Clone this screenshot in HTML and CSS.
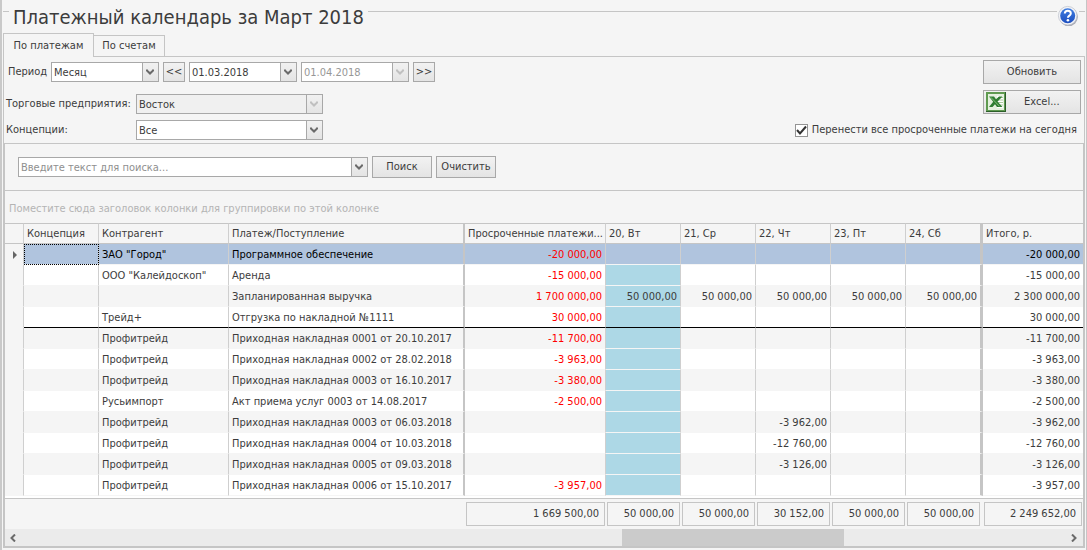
FILE: index.html
```html
<!DOCTYPE html>
<html lang="ru">
<head>
<meta charset="utf-8">
<title>Платежный календарь</title>
<link rel="stylesheet" href="styles.css">
</head>
<body>
<main class="window">
<header class="title-bar">
  <span class="title-rule title-rule-start"></span>
  <h1 class="title">Платежный календарь за Март 2018</h1>
  <span class="title-rule"></span>
  <button class="help" type="button" aria-label="Справка">
    <svg width="22" height="22" viewBox="0 0 22 22">
      <defs><linearGradient id="hb" x1="0" y1="0" x2="0" y2="1"><stop offset="0" stop-color="#3f7de0"/><stop offset="1" stop-color="#1d4fc0"/></linearGradient></defs>
      <circle cx="11.6" cy="11.8" r="9.3" fill="#8a8f9c" opacity=".7"/>
      <circle cx="10.7" cy="10.7" r="9.3" fill="#f2f3f7" stroke="#bcc0ca" stroke-width=".7"/>
      <circle cx="10.7" cy="10.7" r="7.5" fill="url(#hb)"/>
      <path d="M7.8 8.6C7.8 6.8 9 5.8 10.8 5.8s3 1 3 2.6c0 2.2-2.9 2.2-2.9 4.4" fill="none" stroke="#fff" stroke-width="2"/>
      <circle cx="10.9" cy="15.3" r="1.3" fill="#fff"/>
    </svg>
  </button>
  <span class="title-rule title-rule-end"></span>
</header>
<div class="tabs" role="tablist">
  <button class="tab tab-active" type="button" role="tab" aria-selected="true">По платежам</button>
  <button class="tab" type="button" role="tab" aria-selected="false">По счетам</button>
  <span class="tab-rule"></span>
</div>
<section class="page">
<form class="filters">
  <div class="filter-fields">
    <div class="line line-period">
      <label for="period">Период</label>
      <span class="combo combo-period"><select id="period"><option>Месяц</option></select><svg class="arrow" viewBox="0 0 8 7"><path d="M1 1.5v1L4 5.5 7 2.5v-1" /></svg></span>
      <button class="btn step" type="button">&lt;&lt;</button>
      <span class="combo combo-date"><input type="text" value="01.03.2018" aria-label="Начало периода"><svg class="arrow" viewBox="0 0 8 7"><path d="M1 1.5v1L4 5.5 7 2.5v-1" /></svg></span>
      <span class="combo combo-date combo-off"><input type="text" value="01.04.2018" aria-label="Конец периода" disabled><svg class="arrow" viewBox="0 0 8 7"><path d="M1 1.5v1L4 5.5 7 2.5v-1" /></svg></span>
      <button class="btn step" type="button">&gt;&gt;</button>
    </div>
    <div class="line line-shop">
      <label class="wide" for="shop">Торговые предприятия:</label>
      <span class="combo combo-wide combo-off combo-gray"><select id="shop" disabled><option>Восток</option></select><svg class="arrow" viewBox="0 0 8 7"><path d="M1 1.5v1L4 5.5 7 2.5v-1" /></svg></span>
    </div>
    <div class="line">
      <label class="wide" for="concept">Концепции:</label>
      <span class="combo combo-wide"><select id="concept"><option>Все</option></select><svg class="arrow" viewBox="0 0 8 7"><path d="M1 1.5v1L4 5.5 7 2.5v-1" /></svg></span>
    </div>
  </div>
  <div class="actions">
    <button class="btn action" type="button">Обновить</button>
    <button class="btn action excel" type="button">
      <svg width="20" height="20" viewBox="0 0 20 20">
        <rect width="20" height="20" fill="#2c5f2a"/>
        <rect x="0" y="0" width="19" height="19" fill="#5f9a50"/>
        <rect x="2" y="2" width="16" height="16" fill="#e4f0de"/>
        <path d="M11 4h6v12h-6z" fill="#fff"/>
        <path d="M12 5.500h5M12 8h5M12 10.500h5M12 13h5" stroke="#a9cb9c" stroke-width="1"/>
        <path d="M3 4.500h5l2 2.700L13 4.500h3.500l-5 5L16.500 15h-5.500L9 12.300 6.500 15H3l4.200-5.200z" fill="#2f7d32"/>
        <path d="M4.800 5.300L13.500 14.300" stroke="#86c27a" stroke-width="1"/>
      </svg>
      <span>Excel...</span>
    </button>
    <label class="check"><input type="checkbox" checked><span class="box"><svg width="11" height="11" viewBox="0 0 11 11"><path d="M1 5l3 3.500L10 1.500" /></svg></span>Перенести все просроченные платежи на сегодня</label>
  </div>
</form>
<section class="grid">
  <form class="search">
    <span class="combo combo-search"><input type="text" placeholder="Введите текст для поиска..." aria-label="Поиск"><svg class="arrow" viewBox="0 0 8 7"><path d="M1 1.5v1L4 5.5 7 2.5v-1" /></svg></span>
    <button class="btn find" type="button">Поиск</button>
    <button class="btn find" type="button">Очистить</button>
  </form>
  <p class="group-hint">Поместите сюда заголовок колонки для группировки по этой колонке</p>
  <table class="data">
    <colgroup><col class="c-mark"><col class="c-concept"><col class="c-agent"><col class="c-pay"><col class="c-over"><col class="c-day"><col class="c-day"><col class="c-day"><col class="c-day"><col class="c-last"><col class="c-total"></colgroup>
    <thead><tr><th></th><th>Концепция</th><th>Контрагент</th><th class="fix">Платеж/Поступление</th><th>Просроченные платежи...</th><th>20, Вт</th><th>21, Ср</th><th>22, Чт</th><th>23, Пт</th><th class="fix-end">24, Сб</th><th>Итого, р.</th></tr></thead>
    <tbody>
      <tr class="sel"><td><svg class="mark" width="5" height="8" viewBox="0 0 5 8"><path d="M0 0l4 4-4 4z"/></svg></td><td class="focus"></td><td>ЗАО "Город"</td><td class="fix">Программное обеспечение</td><td class="red">-20 000,00</td><td></td><td></td><td></td><td></td><td class="fix-end"></td><td>-20 000,00</td></tr>
      <tr><td></td><td></td><td>ООО "Калейдоскоп"</td><td class="fix">Аренда</td><td class="red">-15 000,00</td><td class="today"></td><td></td><td></td><td></td><td class="fix-end"></td><td>-15 000,00</td></tr>
      <tr><td></td><td></td><td></td><td class="fix">Запланированная выручка</td><td class="red">1 700 000,00</td><td class="today">50 000,00</td><td>50 000,00</td><td>50 000,00</td><td>50 000,00</td><td class="fix-end">50 000,00</td><td>2 300 000,00</td></tr>
      <tr class="split"><td></td><td></td><td>Трейд+</td><td class="fix">Отгрузка по накладной №1111</td><td class="red">30 000,00</td><td class="today"></td><td></td><td></td><td></td><td class="fix-end"></td><td>30 000,00</td></tr>
      <tr><td></td><td></td><td>Профитрейд</td><td class="fix">Приходная накладная 0001 от 20.10.2017</td><td class="red">-11 700,00</td><td class="today"></td><td></td><td></td><td></td><td class="fix-end"></td><td>-11 700,00</td></tr>
      <tr><td></td><td></td><td>Профитрейд</td><td class="fix">Приходная накладная 0002 от 28.02.2018</td><td class="red">-3 963,00</td><td class="today"></td><td></td><td></td><td></td><td class="fix-end"></td><td>-3 963,00</td></tr>
      <tr><td></td><td></td><td>Профитрейд</td><td class="fix">Приходная накладная 0003 от 16.10.2017</td><td class="red">-3 380,00</td><td class="today"></td><td></td><td></td><td></td><td class="fix-end"></td><td>-3 380,00</td></tr>
      <tr><td></td><td></td><td>Русьимпорт</td><td class="fix">Акт приема услуг 0003 от 14.08.2017</td><td class="red">-2 500,00</td><td class="today"></td><td></td><td></td><td></td><td class="fix-end"></td><td>-2 500,00</td></tr>
      <tr><td></td><td></td><td>Профитрейд</td><td class="fix">Приходная накладная 0003 от 06.03.2018</td><td></td><td class="today"></td><td></td><td>-3 962,00</td><td></td><td class="fix-end"></td><td>-3 962,00</td></tr>
      <tr><td></td><td></td><td>Профитрейд</td><td class="fix">Приходная накладная 0004 от 10.03.2018</td><td></td><td class="today"></td><td></td><td>-12 760,00</td><td></td><td class="fix-end"></td><td>-12 760,00</td></tr>
      <tr><td></td><td></td><td>Профитрейд</td><td class="fix">Приходная накладная 0005 от 09.03.2018</td><td></td><td class="today"></td><td></td><td>-3 126,00</td><td></td><td class="fix-end"></td><td>-3 126,00</td></tr>
      <tr><td></td><td></td><td>Профитрейд</td><td class="fix">Приходная накладная 0006 от 15.10.2017</td><td class="red">-3 957,00</td><td class="today"></td><td></td><td></td><td></td><td class="fix-end"></td><td>-3 957,00</td></tr>
      <tr class="rest"><td colspan="11"></td></tr>
    </tbody>
    <tfoot><tr><td colspan="4"></td><td><div>1 669 500,00</div></td><td><div>50 000,00</div></td><td><div>50 000,00</div></td><td><div>30 152,00</div></td><td><div>50 000,00</div></td><td class="last-day"><div>50 000,00</div></td><td class="sum"><div>2 249 652,00</div></td></tr></tfoot>
  </table>
  <div class="scroll">
    <svg width="8" height="8" viewBox="0 0 8 8"><path d="M6 0.500L2.500 4 6 7.500"/></svg>
    <span class="track"><span class="thumb"></span></span>
    <svg width="8" height="8" viewBox="0 0 8 8"><path d="M2 0.500L5.500 4 2 7.500"/></svg>
  </div>
</section>
</section>
</main>
</body>
</html>
```
FILE: styles.css
```css
* { box-sizing: border-box; }
body {
  margin: 0;
  background: #f5f5f5;
  color: #3c3c3c;
  font: 11px/14px "DejaVu Sans Condensed", "Noto Sans", sans-serif;
}
input, select, button { font: inherit; color: inherit; margin: 0; }
.window {
  min-height: 100vh;
  padding: 0 1px 2px 1px;
  border-left: 2px solid #c9c9c9;
  border-right: 1px solid #c5c5c5;
  border-bottom: 1px solid #c5c5c5;
  display: flex;
  flex-direction: column;
}
.title-bar { display: flex; height: 33px; }
.title {
  margin: 0;
  padding: 4px 4px 0;
  font-size: 20px;
  line-height: 26px;
  font-weight: normal;
}
.title-rule { flex: 1; height: 12px; border-bottom: 1px solid #c5c5c5; }
.title-rule-start, .title-rule-end { flex: none; width: 6px; }
.help { margin-top: 5px; padding: 0; width: 22px; height: 22px; border: 0; background: none; }
.tabs { display: flex; align-items: flex-end; height: 24px; }
.tab {
  height: 22px;
  width: 71px;
  padding: 0;
  background: #f5f5f5;
  border: 1px solid #c5c5c5;
  border-left: 0;
}
.tab-active { height: 24px; width: 91px; border-left: 1px solid #c5c5c5; border-bottom: 0; }
.tab-rule { flex: 1; border-bottom: 1px solid #c5c5c5; }
.page {
  flex: 1;
  display: flex;
  flex-direction: column;
  border: 1px solid #c5c5c5;
  border-top: 0;
}
.filters { display: flex; justify-content: space-between; height: 86px; margin: 0; }
.line { display: flex; align-items: center; gap: 4px; height: 20px; margin-bottom: 6px; padding-left: 2px; }
.line-period { margin: 5px 0 12px; padding-left: 4px; }
.line-period label { width: 39px; }
.wide { width: 126px; }
.combo {
  display: flex;
  height: 20px;
  border: 1px solid #a8a8a8;
  background: #fff;
}
.combo input, .combo select {
  flex: 1;
  min-width: 0;
  padding: 1px 2px 0;
  border: 0;
  outline: 0;
  background: transparent;
  appearance: none;
  opacity: 1;
}
.combo input::placeholder { color: #8f8f8f; opacity: 1; }
.arrow {
  width: 16px;
  height: 18px;
  padding: 5px 4px 6px 3px;
  border-left: 1px solid #a8a8a8;
  background: linear-gradient(#f1f1f1, #e4e4e4);
  fill: none;
  stroke: #6a6a6a;
  stroke-width: 2;
}
.combo-period, .combo-date { width: 108px; }
.combo-wide { width: 187px; }
.combo-search { width: 350px; }
.combo-off .arrow { stroke: #c0c0c0; }
.combo-off input { color: #979797; }
.combo-gray { background: #f0f0f0; }
.btn {
  padding: 0;
  border: 1px solid #a8a8a8;
  background: linear-gradient(#f2f2f2, #e4e4e4);
}
.step { width: 22px; height: 20px; }
.actions { display: flex; flex-direction: column; align-items: flex-end; gap: 6px; padding: 3px 3px 0 0; }
.action { width: 98px; height: 24px; }
.excel { display: flex; align-items: center; padding-left: 2px; }
.excel span { flex: 1; padding-left: 18px; text-align: left; }
.check { display: flex; align-items: center; gap: 4px; height: 14px; margin-top: 3px; padding-right: 4px; }
.check input { position: absolute; opacity: 0; }
.box { width: 13px; height: 13px; border: 1px solid #949494; background: #fff; }
.box svg { display: block; fill: none; stroke: #333; stroke-width: 2; }
.grid {
  flex: 1;
  display: flex;
  flex-direction: column;
  border: 1px solid #c5c5c5;
}
.search {
  display: flex;
  align-items: center;
  gap: 4px;
  height: 47px;
  margin: 0;
  padding-left: 13px;
  border-bottom: 1px solid #c5c5c5;
}
.find { width: 60px; height: 22px; }
.group-hint { margin: 0; height: 32px; padding: 11px 4px 0; color: #b4b4b4; }
.data { width: 100%; table-layout: fixed; border-collapse: separate; border-spacing: 0; }
.c-mark { width: 19px; }
.c-concept { width: 75px; }
.c-agent { width: 130px; }
.c-over { width: 141px; }
.c-pay { width: 236px; }
.c-day { width: 75px; }
.c-last { width: 77px; }
.data th, .data td { height: 21px; padding: 0 3px; border-right: 1px solid #cfcfcf; white-space: nowrap; }
.data th { font-weight: normal; text-align: left; border-top: 1px solid #c5c5c5; border-bottom: 1px solid #c5c5c5; }
.data th:last-child, .data td:last-child { border-right: 0; }
.data .fix { border-right: 2px solid #c5c5c5; }
.data .fix-end { border-right: 3px solid #c5c5c5; }
.data tbody td { padding-top: 1px; border-bottom: 1px solid #f5f5f5; background: #fff; }
.data tbody tr:nth-child(odd) td { background: #f5f5f5; }
.data tbody td:first-child { padding-left: 8px; background: #f5f5f5; }
.data tbody td:nth-child(2) { background: #fff; }
.data tbody td:nth-child(n+5) { text-align: right; }
.data tbody .today { background: #add8e6; }
.data tbody tr:nth-child(odd) .today { background: #add8e6; }
.data tbody tr.sel td:nth-child(n+2) { background: #b0c4de; color: #000; }
.data tbody td.red, .data tbody tr.sel td.red { color: #f00; }
.data tbody .focus { outline: 1px dotted #000; outline-offset: -1px; }
.data tbody .split td:nth-child(n+2) { border-bottom-color: #000; }
.data tbody .rest td:first-child { height: 2px; padding: 0; border: 0; background: #fff; }
.mark { display: block; fill: #666; }
.data tfoot td { height: 31px; padding: 3px 1px; border-right: 0; border-top: 1px solid #c5c5c5; }
.data tfoot .last-day { padding-right: 3px; }
.data tfoot div { height: 24px; padding: 4px 5px; border: 1px solid #c5c5c5; text-align: right; }
.scroll { display: flex; align-items: center; height: 17px; margin-top: auto; padding: 0 5px 0 4px; background: #ebebeb; fill: none; stroke: #6a6a6a; stroke-width: 2; }
.track { flex: 1; display: flex; height: 17px; }
.thumb { width: 21%; margin-left: 57.5%; background: #cbcbcb; }
```
